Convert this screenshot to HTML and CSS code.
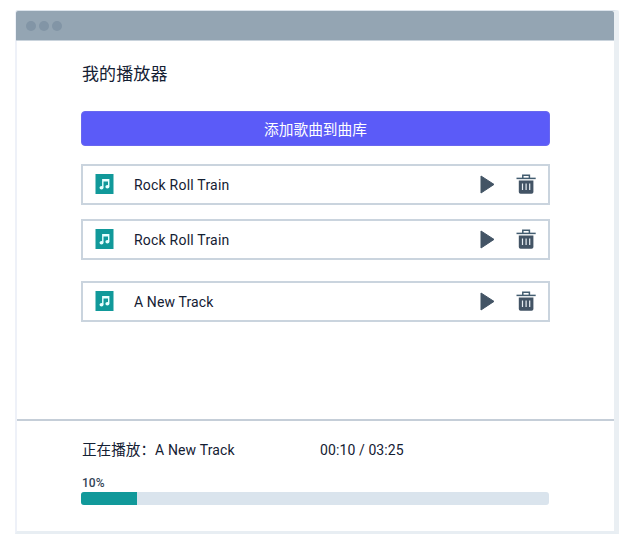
FILE: index.html
```html
<!DOCTYPE html>
<html lang="zh-CN">
<head>
<meta charset="utf-8">
<title>我的播放器</title>
<link rel="stylesheet" href="styles.css">
</head>
<body>
<svg class="defs" width="0" height="0" aria-hidden="true">
  <symbol id="music" viewBox="0 0 18 20">
    <rect width="18" height="20" fill="#11999a"/>
    <path d="M7.3 13.6V5.6H13.2V12.5M7.3 6.7H13.2" fill="none" stroke="#e9ffff" stroke-width="1.4"/>
    <ellipse cx="6" cy="13.8" rx="2" ry="1.8" fill="#e9ffff"/>
    <ellipse cx="11.9" cy="12.8" rx="2" ry="1.8" fill="#e9ffff"/>
  </symbol>
  <symbol id="play" viewBox="0 0 15 19">
    <path d="M1 1L14 9.4L1 18Z" fill="#435465" stroke="#435465" stroke-linejoin="round"/>
  </symbol>
  <symbol id="trash" viewBox="0 0 20 20">
    <path d="M6.8 4V1.2H13.4V4" fill="none" stroke="#435d70" stroke-width="1.5"/>
    <path d="M.5 4.4H19.7" stroke="#435d70" stroke-width="1.5"/>
    <path d="M2.8 6.5H17.4V18Q17.4 19.8 15.6 19.8H4.6Q2.8 19.8 2.8 18Z" fill="#435465"/>
    <path d="M6.5 9.5V16M10.1 9.5V16M13.7 9.5V16" stroke="#e8eef3" stroke-width="1.2"/>
  </symbol>
</svg>
<div class="window">
  <header class="titlebar"><i class="dot"></i><i class="dot"></i><i class="dot"></i></header>
  <main class="library">
    <h1 class="heading">我的播放器</h1>
    <button class="add">添加歌曲到曲库</button>
    <ul class="tracks">
      <li class="track"><svg class="music"><use href="#music"/></svg><span class="name">Rock Roll Train</span><svg class="play"><use href="#play"/></svg><svg class="trash"><use href="#trash"/></svg></li>
      <li class="track"><svg class="music"><use href="#music"/></svg><span class="name">Rock Roll Train</span><svg class="play"><use href="#play"/></svg><svg class="trash"><use href="#trash"/></svg></li>
      <li class="track latest"><svg class="music"><use href="#music"/></svg><span class="name name-short">A New Track</span><svg class="play"><use href="#play"/></svg><svg class="trash"><use href="#trash"/></svg></li>
    </ul>
  </main>
  <footer class="player">
    <div class="status"><span class="label">正在播放：</span><span class="current">A New Track</span><span class="time">00:10 / 03:25</span></div>
    <div class="percent">10%</div>
    <div class="progress"><div class="fill"></div></div>
  </footer>
</div>
</body>
</html>
```
FILE: styles.css
```css
* { box-sizing: border-box; }
body {
  margin: 0;
  padding: 10px 0 0 15px;
  height: 544px;
  background: #fff;
  color: #142033;
  font-family: Roboto, "Noto Sans CJK SC", sans-serif;
  overflow: hidden;
}
.defs { display: block; height: 0; }
svg { display: block; flex: none; }
.window {
  display: flex;
  flex-direction: column;
  width: 604px;
  height: 524px;
  border: solid #e8eef3;
  border-width: 1px 5px 3px 2px;
  border-left-color: #eef1f8;
  border-right-color: #eaeff3;
  border-top-color: #dce4ec;
  border-radius: 3px 2px 0 0;
}
.titlebar {
  display: flex;
  gap: 3px;
  flex: none;
  height: 30px;
  margin-left: -1px;
  padding: 10px 0 0 10px;
  background: #94a5b3;
  border-bottom: 1px solid #c9d3dc;
  border-radius: 2px 2px 0 0;
}
.dot { width: 10px; height: 10px; border-radius: 50%; background: #8295a6; }
.library { flex: none; height: 377.5px; padding: 20px 64px 0; }
.heading {
  margin: 0 0 0 1px;
  height: 50px;
  font-size: 17px;
  font-weight: 400;
  line-height: 26px;
  letter-spacing: .1px;
}
.add {
  display: block;
  width: 469px;
  height: 35px;
  padding: 0;
  border: 1px solid #6967ef;
  border-radius: 4px;
  background: #5b5bf8;
  color: #fff;
  font: 400 14.7px/32px "Noto Sans CJK SC", sans-serif;
}
.tracks { margin: 18px 0 0; padding: 0; list-style: none; }
.track {
  display: flex;
  align-items: center;
  width: 469px;
  height: 41px;
  margin-bottom: 14px;
  padding-left: 12px;
  border: 2px solid #cad4de;
}
.latest { margin-top: 21px; }
.music { width: 19px; height: 20px; margin-top: -1px; }
.name {
  width: 346px;
  margin: 1px 0 0 20px;
  font-size: 14px;
  letter-spacing: .22px;
}
.name-short { letter-spacing: .12px; }
.play { width: 15px; height: 19px; margin-top: -1px; }
.trash { width: 20px; height: 20px; margin: -1px 0 0 21px; }
.player { flex: 1; padding: 17px 64px 0; border-top: 2px solid #c5ced8; }
.status { display: flex; height: 24px; margin-left: 1px; line-height: 24px; font-size: 14px; }
.label { width: 73px; font-size: 14.6px; white-space: nowrap; }
.current { width: 165px; letter-spacing: .15px; }
.time { letter-spacing: .1px; }
.percent { height: 16px; margin: 13px 0 0 1px; color: #344456; font-size: 12px; font-weight: 500; line-height: 16px; }
.progress { width: 468px; height: 13px; margin-top: 1px; border-radius: 3px; background: #dae4ed; overflow: hidden; }
.fill { width: 55.5px; height: 100%; background: #11999a; }
```
